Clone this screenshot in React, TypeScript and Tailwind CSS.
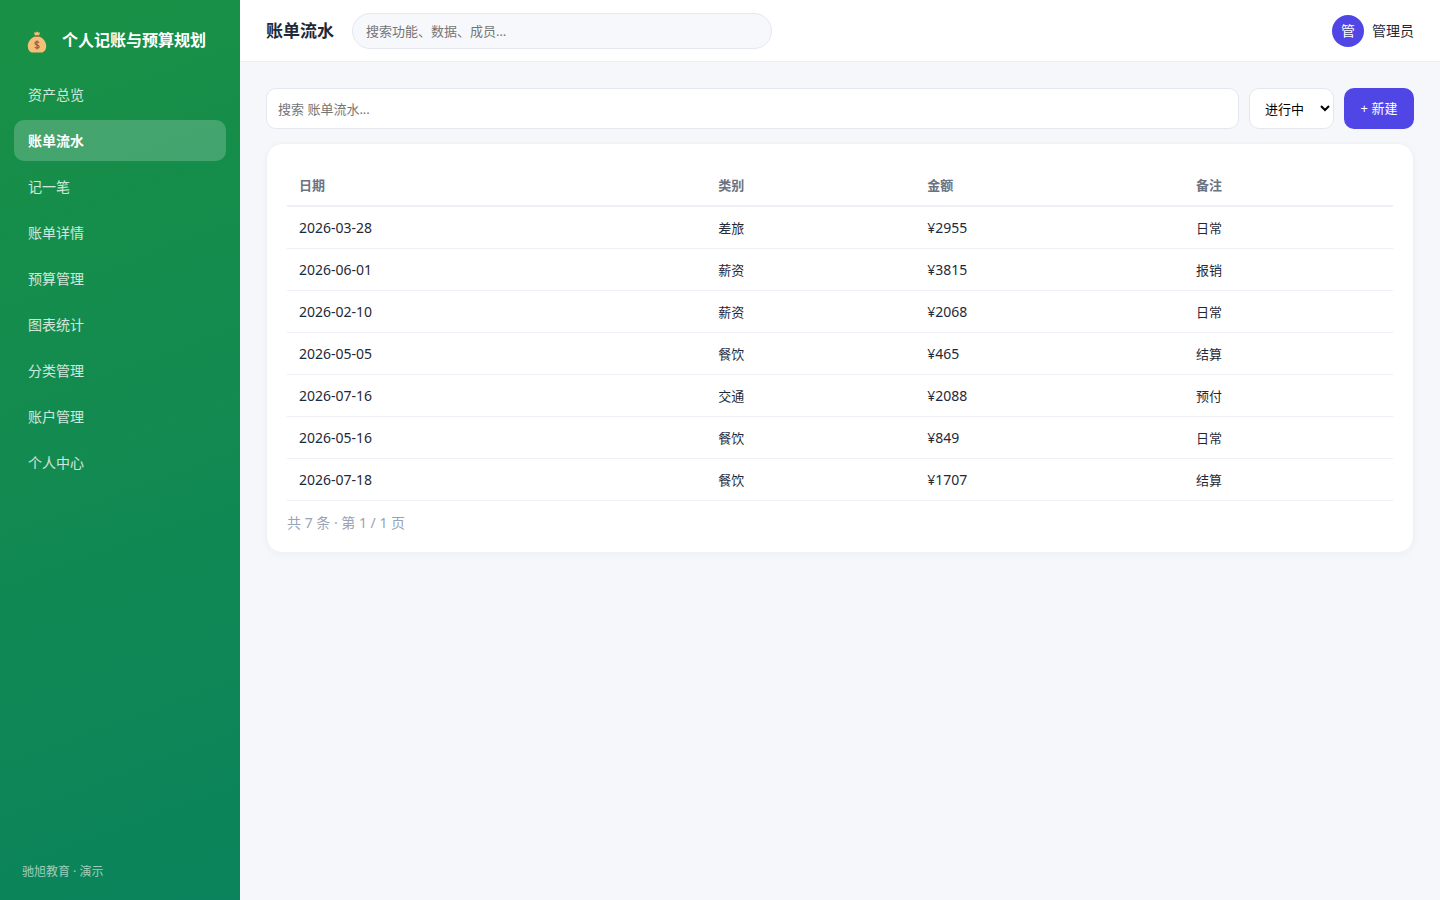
const navItems = [
  '资产总览',
  '账单流水',
  '记一笔',
  '账单详情',
  '预算管理',
  '图表统计',
  '分类管理',
  '账户管理',
  '个人中心',
];

const columns = [
  { label: '日期', width: 'w-[37.9%]' },
  { label: '类别', width: 'w-[18.9%]' },
  { label: '金额', width: 'w-[24.3%]' },
  { label: '备注', width: 'w-[18.9%]' },
];

const bills = [
  { date: '2026-03-28', category: '差旅', amount: '¥2955', note: '日常' },
  { date: '2026-06-01', category: '薪资', amount: '¥3815', note: '报销' },
  { date: '2026-02-10', category: '薪资', amount: '¥2068', note: '日常' },
  { date: '2026-05-05', category: '餐饮', amount: '¥465', note: '结算' },
  { date: '2026-07-16', category: '交通', amount: '¥2088', note: '预付' },
  { date: '2026-05-16', category: '餐饮', amount: '¥849', note: '日常' },
  { date: '2026-07-18', category: '餐饮', amount: '¥1707', note: '结算' },
];

function MoneyBag() {
  return (
    <svg viewBox="0 0 20 22" className="w-5 h-[22px] mt-1 shrink-0" aria-hidden="true">
      <path d="M7 1.2 8.6 1.8 10 .4 11.4 1.8 13 1.2l-.9 3.3H7.9z" fill="#f6bf78" />
      <path
        d="M7.6 5.4h4.8c3.6 1.6 6.8 5.2 6.8 9.4 0 4.6-2.4 6.8-5.2 6.8H6c-2.8 0-5.2-2.2-5.2-6.8 0-4.2 3.2-7.8 6.8-9.4z"
        fill="#f6bf78"
      />
      <path d="M7.4 5h5.2" stroke="#9a5b3c" strokeWidth="1.2" strokeLinecap="round" />
      <path
        d="M12 11.8c-.3-.8-1-1.2-2-1.2s-2 .5-2 1.6c0 2.4 4.1 1 4.1 3.4 0 1.1-1 1.6-2.1 1.6s-1.8-.4-2.1-1.3M10 9.4v9"
        fill="none"
        stroke="#9a5b3c"
        strokeWidth="1.2"
      />
    </svg>
  );
}

function Sidebar() {
  return (
    <aside className="w-60 shrink-0 flex flex-col px-3.5 py-[18px] bg-[linear-gradient(160deg,#199145,#0b835c)] text-white">
      <div className="flex items-center gap-[15px] px-[13px] pt-[9px] pb-[21px]">
        <MoneyBag />
        <span className="text-base leading-6 font-bold whitespace-nowrap">个人记账与预算规划</span>
      </div>
      <nav className="flex flex-col gap-[5px]">
        {navItems.map((item) => (
          <a
            key={item}
            href="#"
            className={`rounded-[10px] px-3.5 py-2.5 text-sm leading-[21px] ${
              item === '账单流水' ? 'bg-white/20 font-bold text-white' : 'text-white/80'
            }`}
          >
            {item}
          </a>
        ))}
      </nav>
      <div className="mt-auto px-2 text-xs leading-5 text-white/60">驰旭教育 · 演示</div>
    </aside>
  );
}

function Topbar() {
  return (
    <header className="flex items-center gap-[18px] px-[26px] h-[62px] bg-white border-b border-[#eceef4]">
      <h1 className="text-[17px] font-bold whitespace-nowrap">账单流水</h1>
      <input
        type="search"
        aria-label="全局搜索"
        placeholder="搜索功能、数据、成员…"
        className="w-[420px] h-9 px-[13px] rounded-full border border-[#e5e7f0] bg-[#f7f8fc] text-[13px] placeholder:text-[#757575] outline-none"
      />
      <div className="ml-auto flex items-center gap-2 text-sm">
        <span className="flex items-center justify-center size-8 rounded-full bg-[#4f46e5] text-white">管</span>
        <span>管理员</span>
      </div>
    </header>
  );
}

function BillTable() {
  return (
    <section className="rounded-2xl bg-white border border-[#f0f1f6] shadow-[0_2px_6px_rgba(30,41,90,0.04)] px-5 pt-5 pb-[19px]">
      <table className="w-full table-fixed border-collapse text-left text-[13px] leading-5">
        <thead>
          <tr className="border-b-2 border-[#eef0f5] text-[#6b7280]">
            {columns.map((col) => (
              <th key={col.label} className={`${col.width} px-3 pt-[11px] pb-2.5 font-semibold`}>
                {col.label}
              </th>
            ))}
          </tr>
        </thead>
        <tbody>
          {bills.map((bill, i) => (
            <tr key={i} className="border-b border-[#eef0f5]">
              <td className="px-3 pt-[11px] pb-2.5 text-sm leading-5">{bill.date}</td>
              <td className="px-3 pt-[11px] pb-2.5">{bill.category}</td>
              <td className="px-3 pt-[11px] pb-2.5 text-sm leading-5">{bill.amount}</td>
              <td className="px-3 pt-[11px] pb-2.5">{bill.note}</td>
            </tr>
          ))}
        </tbody>
      </table>
      <p className="mt-3 text-sm leading-5 text-[#9aa3b5]">共 7 条 · 第 1 / 1 页</p>
    </section>
  );
}

export default function App() {
  return (
    <div className="flex min-h-screen bg-[#f5f7fb] text-[#1f2937] font-['Noto_Sans','Noto_Sans_CJK_SC',sans-serif]">
      <Sidebar />
      <div className="flex-1 min-w-0">
        <Topbar />
        <main className="p-[26px]">
          <div className="flex gap-2.5 mb-3.5">
            <input
              type="search"
              aria-label="搜索账单流水"
              placeholder="搜索 账单流水..."
              className="flex-1 min-w-0 h-[41px] px-[11px] rounded-[10px] border border-[#e5e7f0] bg-white text-[13px] placeholder:text-[#757575] outline-none"
            />
            <select
              aria-label="状态"
              className="w-[85px] h-[41px] pl-[11px] rounded-[10px] border border-[#e5e7f0] bg-white text-[13px] text-black"
            >
              <option>进行中</option>
            </select>
            <button type="button" className="w-[70px] h-[41px] rounded-[10px] bg-[#4f46e5] text-[13px] text-white">
              + 新建
            </button>
          </div>
          <BillTable />
        </main>
      </div>
    </div>
  );
}
